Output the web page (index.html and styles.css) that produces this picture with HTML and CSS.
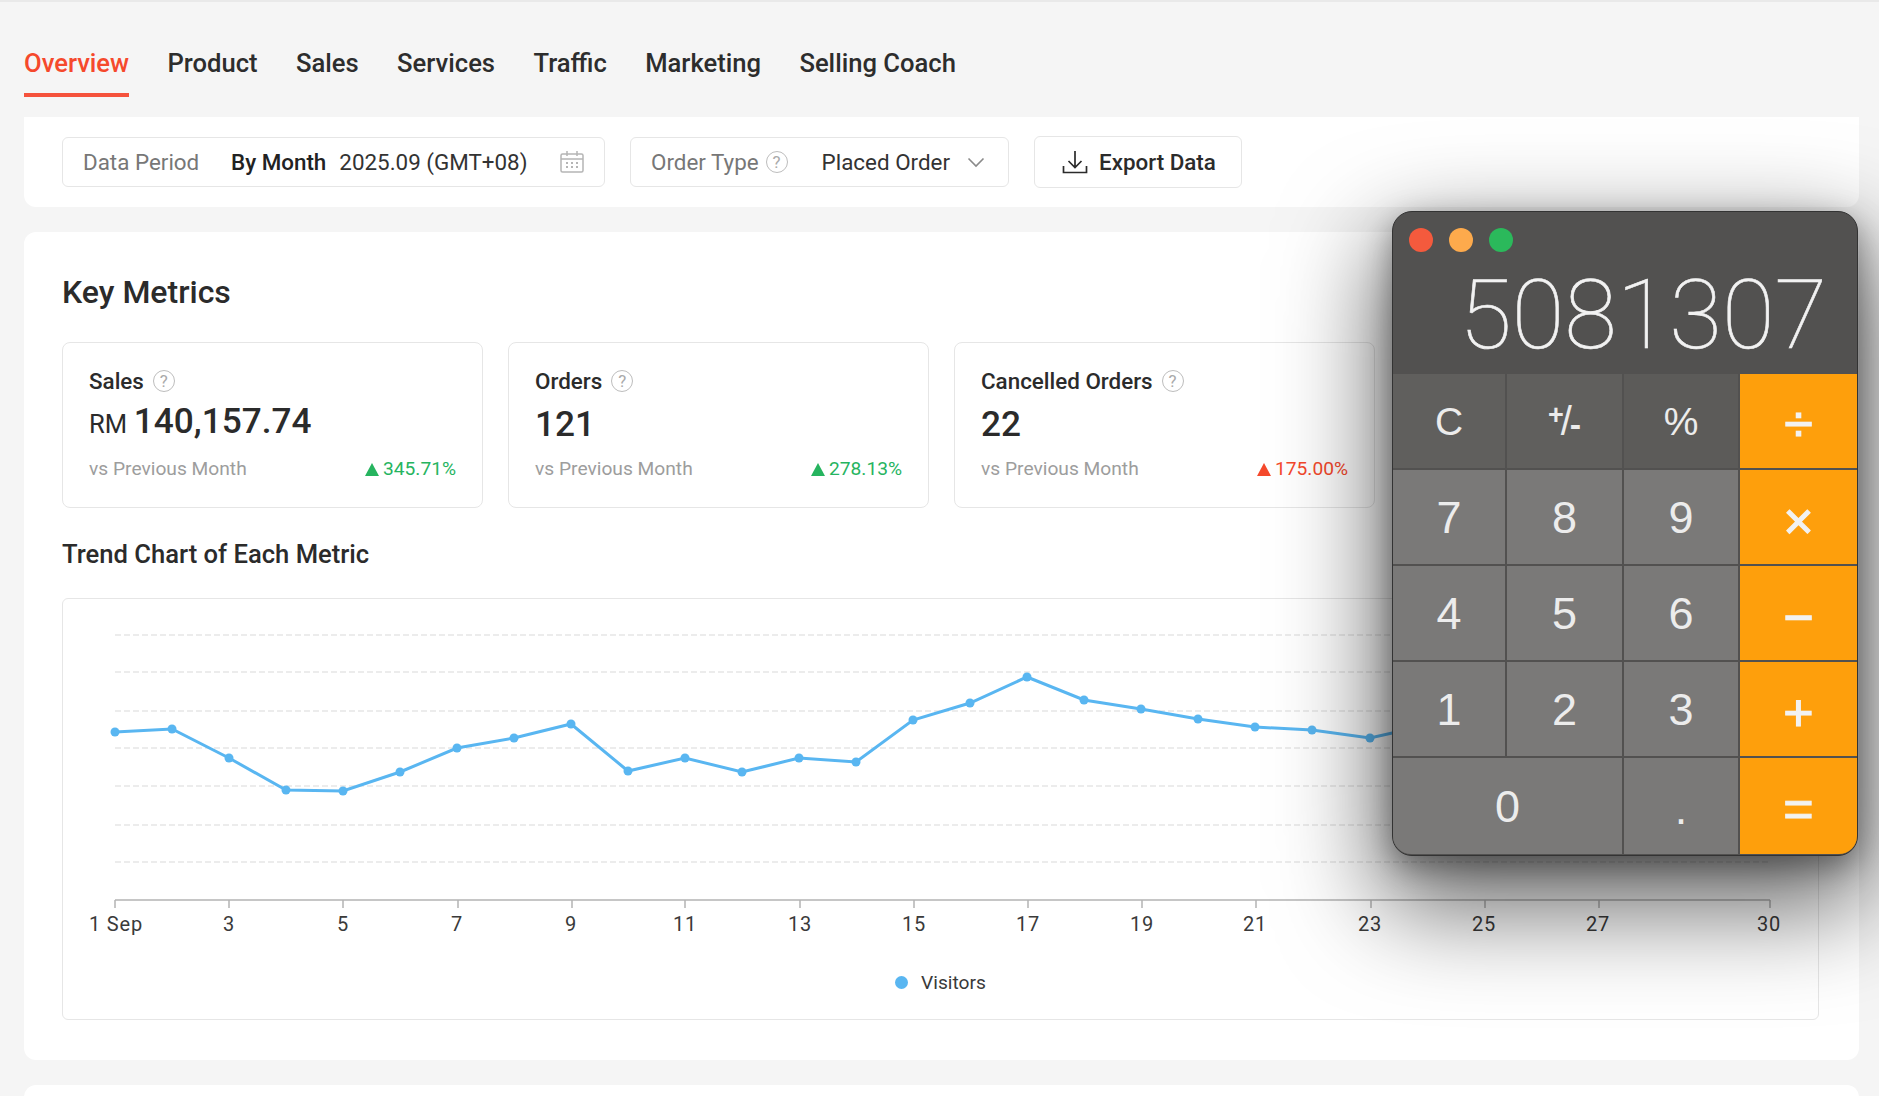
FILE: index.html
```html
<!DOCTYPE html>
<html lang="en">
<head>
<meta charset="utf-8">
<title>Overview</title>
<link rel="stylesheet" href="styles.css">
</head>
<body>
<div class="page">
  <nav class="tabs">
    <a class="tab active">Overview</a>
    <a class="tab">Product</a>
    <a class="tab">Sales</a>
    <a class="tab">Services</a>
    <a class="tab">Traffic</a>
    <a class="tab">Marketing</a>
    <a class="tab">Selling Coach</a>
  </nav>

  <section class="filters">
    <div class="field field-period">
      <span class="field-label period-label">Data Period</span>
      <strong class="field-strong">By Month</strong>
      <span class="field-value">2025.09 (GMT+08)</span>
      <svg class="cal" width="24" height="22" viewBox="0 0 24 22" fill="none" stroke="#b5b5b5" stroke-width="1.5">
        <rect x="1" y="3" width="22" height="18" rx="1.5"/>
        <path d="M1 8h22M7 0v5M17 0v5"/>
        <path d="M6 12h2M11 12h2M16 12h2M6 16h2M11 16h2M16 16h2" stroke-width="2"/>
      </svg>
    </div>
    <div class="field field-order">
      <span class="field-label">Order Type</span>
      <span class="help help-order">?</span>
      <span class="field-value order-value">Placed Order</span>
      <svg class="chev" width="18" height="11" viewBox="0 0 18 11" fill="none" stroke="#8a8a8a" stroke-width="1.6"><path d="M1.5 1.5 9 9l7.500-7.500"/></svg>
    </div>
    <button class="export">
      <svg width="26" height="24" viewBox="0 0 26 24" fill="none" stroke="#2b2b2b" stroke-width="1.7"><path d="M13 1v16M6.500 11l6.500 6.500 6.500-6.500M1.500 16v6.500h23V16"/></svg>
      <span>Export Data</span>
    </button>
  </section>

  <main class="panel">
    <h2 class="panel-title">Key Metrics</h2>
    <div class="metrics">
      <article class="metric">
        <div class="metric-label">Sales <span class="help">?</span></div>
        <div class="metric-value money"><small>RM</small> 140,157.74</div>
        <div class="metric-compare"><span>vs Previous Month</span><span class="delta up"><i class="tri"></i>345.71%</span></div>
      </article>
      <article class="metric">
        <div class="metric-label">Orders <span class="help">?</span></div>
        <div class="metric-value">121</div>
        <div class="metric-compare"><span>vs Previous Month</span><span class="delta up"><i class="tri"></i>278.13%</span></div>
      </article>
      <article class="metric">
        <div class="metric-label">Cancelled Orders <span class="help">?</span></div>
        <div class="metric-value">22</div>
        <div class="metric-compare"><span>vs Previous Month</span><span class="delta down"><i class="tri"></i>175.00%</span></div>
      </article>
    </div>

    <h3 class="trend-title">Trend Chart of Each Metric</h3>
    <div class="chart">
      <svg class="chart-svg" width="1755" height="345" viewBox="63 599 1755 345">
        <defs>
          <marker id="pt" markerUnits="userSpaceOnUse" markerWidth="12" markerHeight="12" refX="6" refY="6">
            <circle cx="6" cy="6" r="4.500" fill="#59b6f1"/>
          </marker>
        </defs>
        <path class="grid" d="M115 635H1770M115 672H1770M115 711H1770M115 748H1770M115 786H1770M115 825H1770M115 862H1770"/>
        <path class="axis" d="M115 900H1770M115 900v8M229 900v8M343 900v8M458 900v8M572 900v8M685 900v8M800 900v8M914 900v8M1028 900v8M1142 900v8M1256 900v8M1371 900v8M1485 900v8M1599 900v8M1770 900v8"/>
        <polyline class="line" marker-start="url(#pt)" marker-mid="url(#pt)" marker-end="url(#pt)"
          points="115,732 172,729 229,758 286,790 343,791 400,772 457,748 514,738 571,724 628,771 685,758 742,772 799,758 856,762 913,720 970,703 1027,677 1084,700 1141,709 1198,719 1255,727 1312,730 1370,738 1428,725"/>
        <g class="ticks">
          <text x="116" y="931">1 Sep</text><text x="229" y="931">3</text><text x="343" y="931">5</text>
          <text x="457" y="931">7</text><text x="571" y="931">9</text><text x="685" y="931">11</text>
          <text x="800" y="931">13</text><text x="914" y="931">15</text><text x="1028" y="931">17</text>
          <text x="1142" y="931">19</text><text x="1255" y="931">21</text><text x="1370" y="931">23</text>
          <text x="1484" y="931">25</text><text x="1598" y="931">27</text><text x="1769" y="931">30</text>
        </g>
      </svg>
      <div class="legend"><i class="legend-dot"></i><span>Visitors</span></div>
    </div>
  </main>

  <section class="next-panel"></section>

  <aside class="calc">
    <header class="calc-head">
      <div class="lights"><i class="light red"></i><i class="light amber"></i><i class="light green"></i></div>
      <div class="display">5081307</div>
    </header>
    <div class="keys">
      <div class="key fn">C</div>
      <div class="key fn"><span class="pm"><span class="pm-plus">+</span><span class="pm-slash">/</span><span class="pm-minus">-</span></span></div>
      <div class="key fn fn-dark">%</div>
      <div class="key op op-div">÷</div>
      <div class="key">7</div><div class="key">8</div><div class="key">9</div><div class="key op">×</div>
      <div class="key">4</div><div class="key">5</div><div class="key">6</div><div class="key op">−</div>
      <div class="key">1</div><div class="key">2</div><div class="key">3</div><div class="key op">+</div>
      <div class="key zero">0</div><div class="key dot">.</div><div class="key op op-eq">=</div>
    </div>
  </aside>
</div>
</body>
</html>
```
FILE: styles.css
```css
* { box-sizing: border-box; }
html, body { margin: 0; padding: 0; }
body { background: #f5f5f5; font-family: Roboto, "Liberation Sans", sans-serif; color: #2b2b2b; }

.page {
  position: relative;
  width: 1879px;
  height: 1096px;
  overflow: hidden;
  padding: 0 20px 0 24px;
  border-top: 2px solid #e9e9e9;
}

/* Tabs */
.tabs { display: flex; gap: 38.400px; height: 95px; margin-bottom: 20px; }
.tab {
  height: 95px;
  padding-top: 46px;
  font-size: 25.600px;
  line-height: 30px;
  font-weight: 500;
  color: #2d2d2d;
  white-space: nowrap;
}
.tab.active { color: #f5492c; border-bottom: 4px solid #f5523c; }

/* Filters */
.filters {
  display: flex;
  align-items: center;
  gap: 25px;
  height: 90px;
  padding: 0 38px;
  margin-bottom: 25px;
  background: #fff;
  border-radius: 0 0 12px 12px;
}
.field {
  display: flex;
  align-items: center;
  height: 50px;
  padding: 0 20px;
  border: 1px solid #e6e6e6;
  border-radius: 6px;
  font-size: 22.400px;
  white-space: nowrap;
}
.field-period { width: 543px; }
.field-order { width: 379px; }
.field-label { color: #777; }
.period-label { width: 148px; }
.field-strong { font-weight: 500; margin-right: 13px; color: #222; }
.field-value { color: #333; }
.cal { margin-left: auto; }
.help-order { margin-left: 7px; }
.order-value { margin-left: 34px; }
.chev { margin-left: 17px; }
.export {
  display: flex;
  align-items: center;
  gap: 11px;
  width: 208px;
  height: 52px;
  padding: 0 0 0 27px;
  background: #fff;
  border: 1px solid #e6e6e6;
  border-radius: 6px;
  font: 500 22.400px Roboto, sans-serif;
  color: #2b2b2b;
}

/* Help icon */
.help {
  display: inline-flex;
  align-items: center;
  justify-content: center;
  width: 22px;
  height: 22px;
  border: 1.500px solid #bdbdbd;
  border-radius: 50%;
  font-size: 17px;
  font-weight: 400;
  color: #aaa;
}

/* Main panel */
.panel {
  height: 828px;
  padding: 42px 40px 40px 38px;
  margin-bottom: 25px;
  background: #fff;
  border-radius: 12px;
}
.panel-title { margin: 0 0 32px; font-size: 32px; line-height: 36px; font-weight: 500; color: #2b2b2b; }
.metrics { display: flex; gap: 25px; }
.metric {
  flex: none;
  width: 421px;
  height: 166px;
  padding: 24px 26px;
  border: 1px solid #e6e6e6;
  border-radius: 8px;
}
.metric-label {
  display: flex;
  align-items: center;
  gap: 9px;
  height: 28px;
  font-size: 22.400px;
  font-weight: 500;
  color: #2b2b2b;
}
.metric-value { margin-top: 7px; height: 44px; font-size: 35.200px; line-height: 44px; font-weight: 500; white-space: pre; }
.metric-value.money { margin-top: 4px; height: 47px; }
.metric-value small { margin-right: -2px; font-size: 25.600px; font-weight: 400; }
.metric-compare {
  display: flex;
  justify-content: space-between;
  align-items: center;
  margin-top: 9px;
  height: 26px;
  font-size: 19.200px;
  color: #9d9d9d;
}
.delta { display: flex; align-items: center; gap: 4px; font-size: 19.200px; }
.delta.up { color: #26b45f; }
.delta.down { color: #f5492c; }
.tri {
  width: 0;
  height: 0;
  margin-top: 3px;
  border-left: 7px solid transparent;
  border-right: 7px solid transparent;
  border-bottom: 13px solid currentColor;
}

.trend-title { margin: 31px 0 29px; font-size: 25.600px; line-height: 30px; font-weight: 500; color: #2b2b2b; }

/* Chart */
.chart {
  width: 1757px;
  height: 422px;
  border: 1px solid #e6e6e6;
  border-radius: 6px;
}
.chart-svg { display: block; }
.grid { stroke: #e6e6e6; stroke-width: 1.500; stroke-dasharray: 6 3; fill: none; }
.axis { stroke: #b4b4b4; stroke-width: 1.500; fill: none; }
.line { stroke: #59b6f1; stroke-width: 3; fill: none; }
.ticks text { font-family: Roboto, sans-serif; font-size: 20px; letter-spacing: .8px; fill: #3a3a3a; text-anchor: middle; }
.legend {
  display: flex;
  align-items: center;
  justify-content: center;
  gap: 13px;
  height: 26px;
  margin-top: 25px;
  font-size: 19.200px;
  color: #3a3a3a;
}
.legend-dot { width: 13px; height: 13px; border-radius: 50%; background: #59b6f1; }

.next-panel { height: 60px; background: #fff; border-radius: 12px 12px 0 0; }

/* Calculator window */
.calc {
  position: absolute;
  left: 1392px;
  top: 209px;
  width: 466px;
  height: 645px;
  border: 1.500px solid #333;
  border-radius: 20px;
  background: #525150;
  box-shadow: 0 40px 100px 12px rgba(0, 0, 0, .6), 0 10px 30px rgba(0, 0, 0, .35);
}
.calc-head { height: 162px; padding: 16px 0 0 16px; border-radius: 18px 18px 0 0; }
.lights { display: flex; gap: 16px; }
.light { width: 24px; height: 24px; border-radius: 50%; }
.red { background: #f45a3d; }
.amber { background: #fdaa4c; }
.green { background: #2bb95b; }
.display {
  margin-top: 15px;
  padding-right: 30px;
  text-align: right;
  font-family: Roboto, sans-serif;
  font-weight: 100;
  font-size: 96px;
  line-height: 96px;
  -webkit-text-stroke: .6px #f2f2f2;
  color: #f2f2f2;
}
.keys {
  display: grid;
  grid-template-columns: 112px 115px 114px 1fr;
  grid-template-rows: 94px 94px 94px 94px 1fr;
  gap: 2px;
  height: 480px;
  overflow: hidden;
  border-radius: 0 0 18px 18px;
  background: #525150;
  font-family: "Liberation Sans", Arial, sans-serif;
  font-size: 45px;
  color: #ececec;
}
.key { display: flex; align-items: center; justify-content: center; padding-top: 1px; background: #7a7978; }
.key.fn { background: #605f5d; font-size: 39px; }
.key.fn-dark { background: #5c5b59; }
.key.op { background: #fe9f0c; padding-top: 8px; font-size: 52px; -webkit-text-stroke: 1.200px #f2f2f2; color: #f2f2f2; }
.key.op-div { padding-top: 6px; }
.key.op-eq { padding-top: 5px; }
.key.zero { grid-column: span 2; }
.key.dot { padding-top: 14px; padding-bottom: 8px; }

/* +/- glyph of the calculator */
.pm { display: flex; align-items: center; font-size: 40px; font-weight: 700; }
.pm-plus { margin-top: -13px; margin-right: -3px; font-size: 27px; }
.pm-slash { font-weight: 400; }
.pm-minus { margin-top: 5px; margin-left: -2px; font-size: 34px; }
```
